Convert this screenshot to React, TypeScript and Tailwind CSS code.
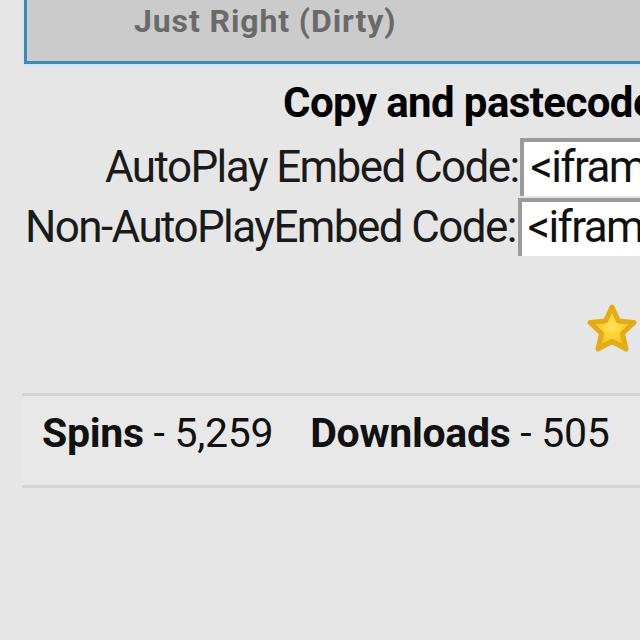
import React from 'react';

const Star: React.FC = () => (
  <svg width="54" height="52" viewBox="0 0 54 52">
    <defs>
      <radialGradient id="sg" cx="50%" cy="45%" r="60%">
        <stop offset="0%" stopColor="#ffe45c" />
        <stop offset="70%" stopColor="#f5c518" />
        <stop offset="100%" stopColor="#d9a00c" />
      </radialGradient>
    </defs>
    <path
      d="M27 4 L33.5 18 L49 19.5 L37.5 30.5 L41 46 L27 38.5 L13 46 L16.5 30.5 L5 19.5 L20.5 18 Z"
      fill="url(#sg)"
      stroke="#e2ab18"
      strokeWidth="5"
      strokeLinejoin="round"
    />
  </svg>
);

const EmbedRow: React.FC<{ label: string; pad: string }> = ({ label, pad }) => (
  <div className={`flex items-center h-[60px] ${pad}`}>
    <span className="text-[44px] tracking-[-1.6px] text-[#1a1a1a] whitespace-nowrap leading-none">{label}</span>
    <div className="ml-[2px] h-[58px] w-[300px] shrink-0 bg-white border-t-4 border-l-4 border-[#9a9a9a] flex items-center pl-[6px] pb-[4px] text-[44px] tracking-[-1.6px] text-[#111] whitespace-nowrap leading-none">
      &lt;iframe
    </div>
  </div>
);

export default function App() {
  return (
    <div className="w-[640px] h-[640px] overflow-hidden bg-[#e6e6e6] font-['Roboto',sans-serif]">
      <div className="w-[900px]">
        {/* selected option button */}
        <div className="ml-[24px] h-[64px] bg-[#cbcbcb] border-l-[3px] border-b-[3px] border-[#3a8ab3] shadow-[0_2px_3px_#bfe9f7] flex items-center pl-[107px] pb-[20px]">
          <span className="text-[32px] tracking-[0.9px] font-bold text-[#6a6a6a] leading-none">Just Right (Dirty)</span>
        </div>

        <div className="pt-[18px] pl-[283px] text-[42px] tracking-[-0.6px] font-bold text-black leading-none whitespace-nowrap">
          Copy and pastecode
        </div>

        <div className="mt-[13px]">
          <EmbedRow label="AutoPlay Embed Code:" pad="pl-[105px]" />
          <EmbedRow label="Non-AutoPlayEmbed Code:" pad="pl-[25px]" />
        </div>

        <div className="w-[640px] flex justify-end pr-[1px] mt-[46px]">
          <Star />
        </div>

        <div className="ml-[22px] mt-[38px] border-t-[3px] border-b-[3px] border-[#d3d3d3] bg-[#e8e8e8] h-[95px] flex items-center pl-[20px] pb-[14px] text-[41px] tracking-[-0.3px] leading-none text-[#111] whitespace-nowrap">
          <span className="font-bold">Spins</span>
          <span>&nbsp;- 5,259</span>
          <span className="font-bold ml-[37px]">Downloads</span>
          <span>&nbsp;- 505</span>
        </div>
      </div>
    </div>
  );
}
